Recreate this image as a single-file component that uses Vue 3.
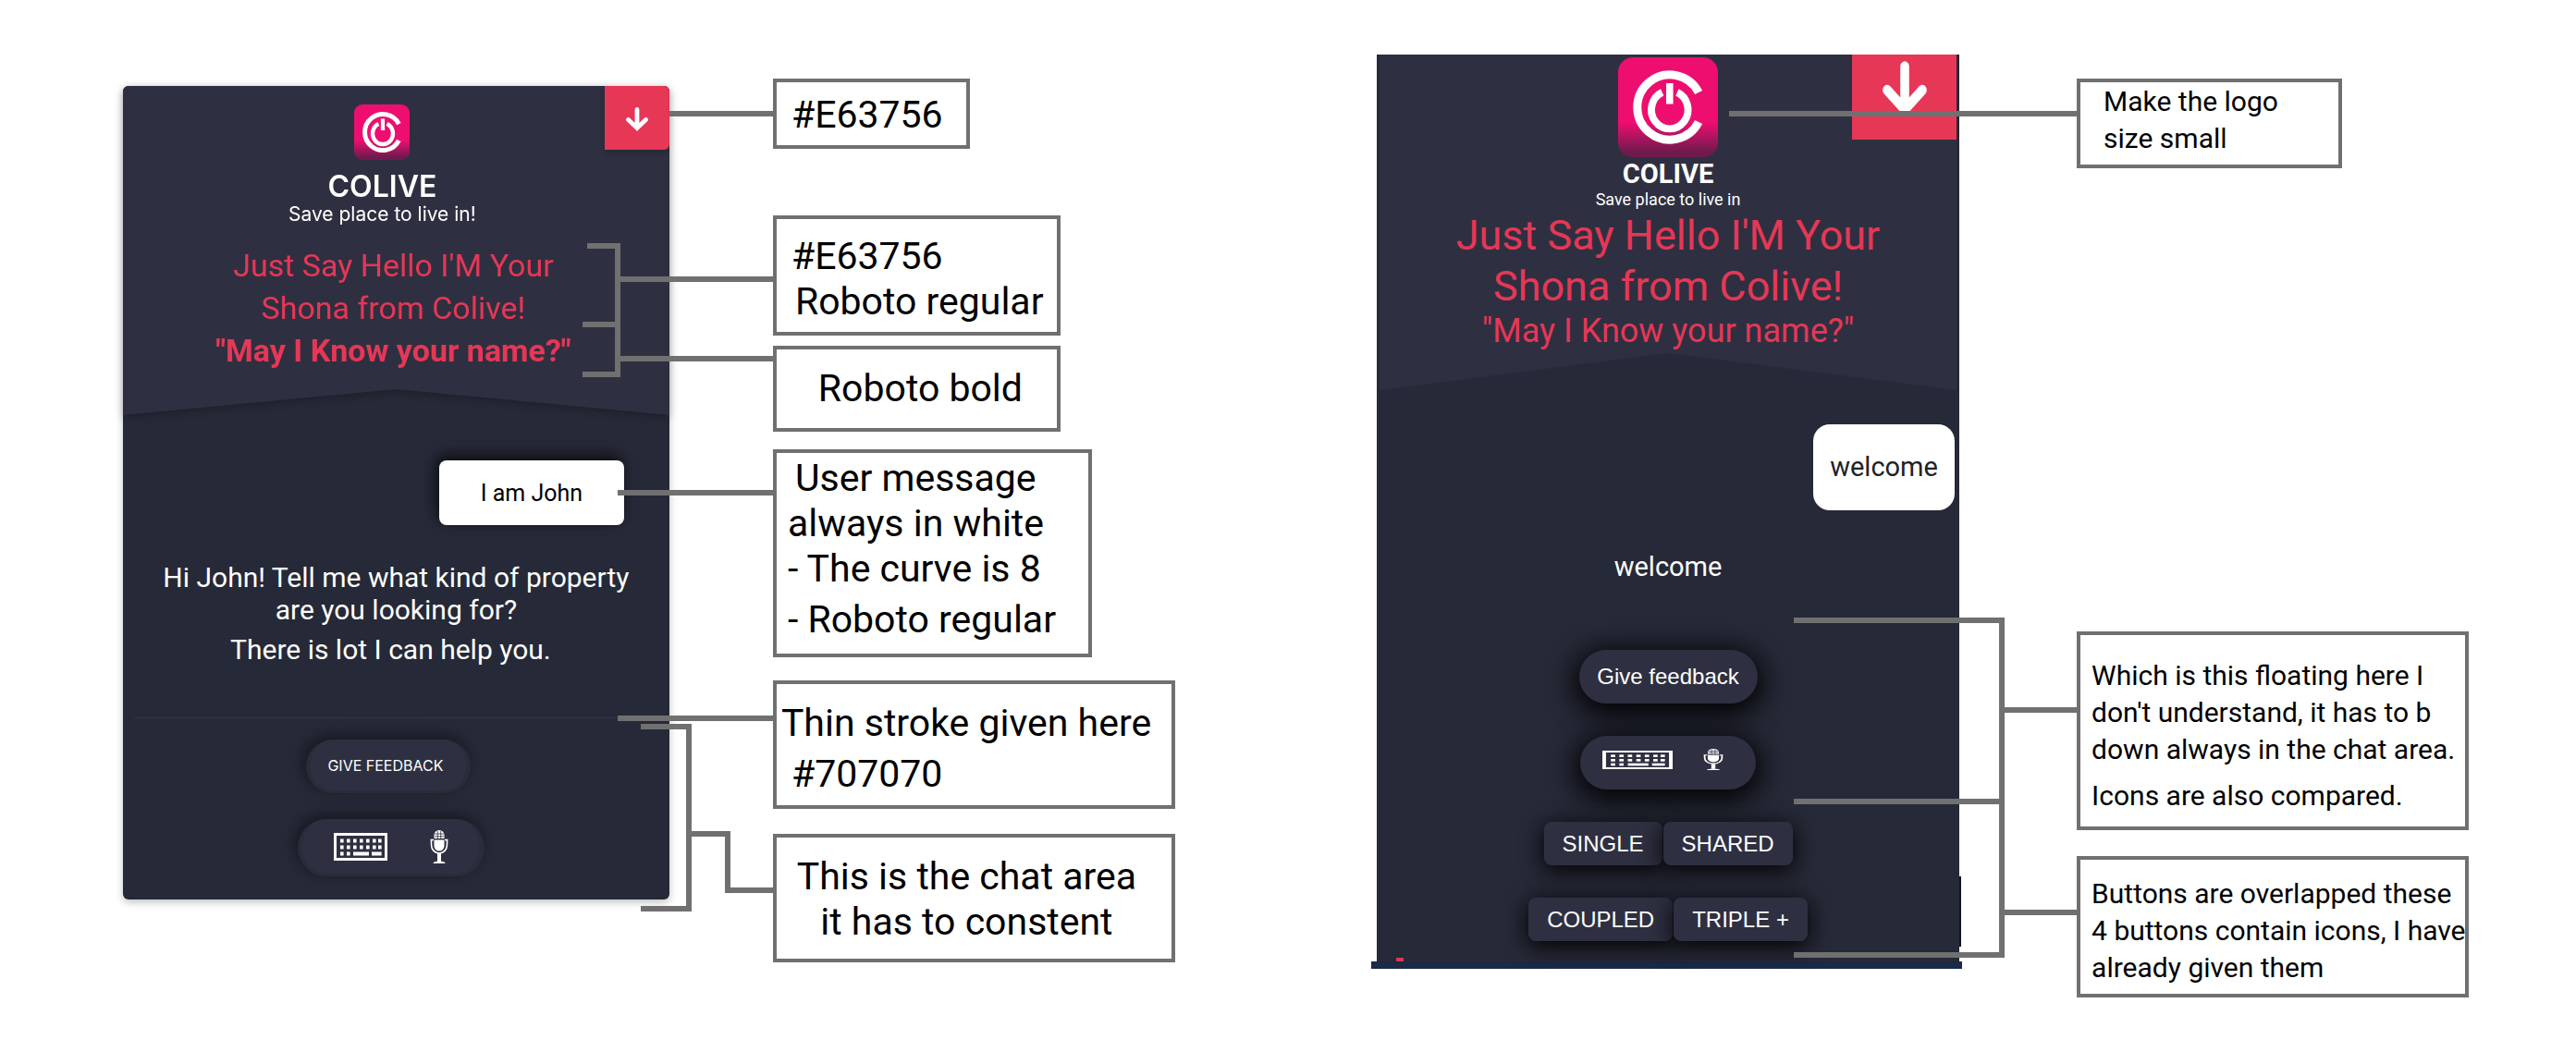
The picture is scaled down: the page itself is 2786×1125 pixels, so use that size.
<script setup>
const designLines = [
  'M591 123H703',
  'M502 266H535V405H497',
  'M497 351H535',
  'M535 302H703',
  'M535 388H703',
  'M535 533H703',
  'M535 777H703',
  'M560 786H612V983H560',
  'M612 902H654V963H703',
]

const buildLines = [
  'M387 123H763',
  'M457 671H682V1033H457',
  'M457 867H682',
  'M682 768H763',
  'M682 987H763',
]

const keyRows = [11, 18]
const keyCols = [8, 15, 22, 29, 36, 43, 49]
</script>

<template>
  <svg class="defs" aria-hidden="true">
    <defs>
      <linearGradient id="logo-fill" x1="0" y1="0" x2="0" y2="1">
        <stop offset="0.65" stop-color="#ee0e70" />
        <stop offset="0.95" stop-color="#6f1a4f" />
      </linearGradient>
      <symbol id="logo" viewBox="0 0 60 60">
        <rect width="60" height="60" rx="9" fill="url(#logo-fill)" />
        <g fill="none" stroke="#fff">
          <path d="M48.4 21.1A19.5 19.5 0 1 0 48.4 38.9" stroke-width="5" />
          <path d="M35.5 21A11 11.5 0 1 1 26.5 21" stroke-width="4.4" />
          <path d="M31 15.5V28" stroke-width="4.2" />
        </g>
      </symbol>
      <symbol id="arrow" viewBox="0 0 24 26" preserveAspectRatio="none">
        <path d="M12 2.5V21M2.5 13.4L12 22.4L21.5 13.4" fill="none" stroke="#fff" stroke-width="4.8" stroke-linecap="round" />
        <path d="M8 20h8l-4 5.8z" fill="#fff" />
      </symbol>
      <symbol id="keyboard" viewBox="0 0 58 30" preserveAspectRatio="none">
        <rect x="1.5" y="1.5" width="55" height="27" fill="none" stroke="#fff" stroke-width="3" />
        <g fill="#fff">
          <template v-for="row in keyRows" :key="row">
            <rect v-for="col in keyCols" :key="col" :x="col - 1" :y="row - 4.5" width="3.6" height="4" />
          </template>
          <rect x="7" y="20.5" width="3.6" height="4" />
          <rect x="14" y="20.5" width="3.6" height="4" />
          <rect x="21" y="20.5" width="17" height="4" />
          <rect x="41" y="20.5" width="10.6" height="4" />
        </g>
      </symbol>
      <symbol id="mic" viewBox="0 0 20 36" preserveAspectRatio="none">
        <path d="M4.500 9V5.500a5.500 5.500 0 0 1 11 0V9z" fill="#fff" />
        <path d="M8.3 1v8M11.7 1v8M5 4h10M5 6.8h10" stroke="#2e3041" stroke-width="0.8" />
        <path d="M4.500 10.500h11v6.500a5.500 5.500 0 0 1-11 0z" fill="#fff" />
        <path d="M0.500 10.500H4M16 10.500h3.500M1.500 11v5a8.500 9 0 0 0 17 0v-5" fill="none" stroke="#fff" stroke-width="1.600" />
        <path d="M10 25v9" fill="none" stroke="#fff" stroke-width="4" />
        <path d="M3.500 36q0-2.500 6.500-2.500t6.500 2.500z" fill="#fff" />
      </symbol>
    </defs>
  </svg>

  <main class="board">
    <section class="figure figure-design">
      <article class="phone design">
        <header class="head-shadow">
          <div class="head">
            <button class="down" type="button" aria-label="Minimise chat">
              <svg class="down-icon"><use href="#arrow" /></svg>
            </button>
            <div class="brand">
              <svg class="logo"><use href="#logo" /></svg>
              <h1 class="name">COLIVE</h1>
              <p class="tagline">Save place to live in!</p>
            </div>
            <p class="greeting">
              Just Say Hello I'M Your<br />Shona from Colive!<br /><strong>"May I Know your name?"</strong>
            </p>
          </div>
        </header>
        <p class="bubble">I am John</p>
        <div class="reply">
          <p>Hi John! Tell me what kind of property<br />are you looking for?</p>
          <p class="reply-last">There is lot I can help you.</p>
        </div>
        <footer class="controls">
          <button class="pill feedback" type="button">GIVE FEEDBACK</button>
          <div class="pill inputs">
            <button class="icon-button" type="button" aria-label="Type a message">
              <svg class="keyboard"><use href="#keyboard" /></svg>
            </button>
            <button class="icon-button" type="button" aria-label="Speak">
              <svg class="mic"><use href="#mic" /></svg>
            </button>
          </div>
        </footer>
      </article>

      <aside class="notes">
        <div class="note n-color"><p class="in">#E63756</p></div>
        <div class="note n-regular">
          <p class="in">#E63756</p>
          <p class="in-more">Roboto regular</p>
        </div>
        <div class="note n-bold"><p>Roboto bold</p></div>
        <div class="note n-message">
          <p class="in-more">User message</p>
          <p>always in white</p>
          <p>- The curve is 8</p>
          <p class="apart">- Roboto regular</p>
        </div>
        <div class="note n-stroke">
          <p>Thin stroke given here</p>
          <p class="apart in-more">#707070</p>
        </div>
        <div class="note n-area">
          <p>This is the chat area<br />it has to constent</p>
        </div>
      </aside>

      <svg class="lines" viewBox="0 0 1138 1125" preserveAspectRatio="none" aria-hidden="true">
        <path v-for="d in designLines" :key="d" :d="d" />
      </svg>
    </section>

    <section class="figure figure-build">
      <div class="build-wrap">
        <article class="phone build">
          <header class="head">
            <button class="down" type="button" aria-label="Minimise chat">
              <svg class="down-icon"><use href="#arrow" /></svg>
            </button>
            <div class="brand">
              <svg class="logo"><use href="#logo" /></svg>
              <h1 class="name">COLIVE</h1>
              <p class="tagline">Save place to live in</p>
            </div>
            <p class="greeting">Just Say Hello I'M Your<br />Shona from Colive!</p>
            <p class="question">"May I Know your name?"</p>
          </header>
          <p class="bubble">welcome</p>
          <p class="reply">welcome</p>
          <div class="controls">
            <button class="pill feedback" type="button">Give feedback</button>
            <div class="pill inputs">
              <button class="icon-button" type="button" aria-label="Type a message">
                <svg class="keyboard"><use href="#keyboard" /></svg>
              </button>
              <button class="icon-button" type="button" aria-label="Speak">
                <svg class="mic"><use href="#mic" /></svg>
              </button>
            </div>
            <div class="options">
              <button class="option" type="button">SINGLE</button>
              <button class="option" type="button">SHARED</button>
            </div>
            <div class="options">
              <button class="option" type="button">COUPLED</button>
              <button class="option" type="button">TRIPLE +</button>
            </div>
          </div>
          <span class="fleck"></span>
          <span class="edge"></span>
        </article>
        <div class="taskbar"></div>
      </div>

      <aside class="notes small">
        <div class="note n-logo"><p>Make the logo<br />size small</p></div>
        <div class="note n-floating">
          <p>Which is this floating here I<br />don't understand, it has to b<br />down always in the chat area.</p>
          <p class="apart">Icons are also compared.</p>
        </div>
        <div class="note n-buttons">
          <p>Buttons are overlapped these<br />4 buttons contain icons, I have<br />already given them</p>
        </div>
      </aside>

      <svg class="lines" viewBox="0 0 1187 1125" preserveAspectRatio="none" aria-hidden="true">
        <path v-for="d in buildLines" :key="d" :d="d" />
      </svg>
    </section>
  </main>
</template>

<style>
body {
  margin: 0;
  background: #fff;
}
</style>

<style scoped>
.defs {
  position: absolute;
  width: 0;
  height: 0;
}

.board {
  display: grid;
  grid-template-columns: minmax(0, 1138fr) minmax(0, 1187fr);
  column-gap: 8.36%;
  padding: 0 4.16% 44px 4.77%;
  font-family: Roboto, sans-serif;
  color: #000;
}

p,
h1 {
  margin: 0;
}

button {
  border: 0;
  padding: 0;
  font: inherit;
  color: inherit;
  background: none;
  cursor: pointer;
}

svg {
  display: block;
}

.figure {
  position: relative;
  display: grid;
  align-items: start;
  white-space: nowrap;
}

.figure-design {
  grid-template-columns: minmax(0, 591fr) minmax(0, 435fr);
  column-gap: 9.84%;
}

.figure-build {
  grid-template-columns: minmax(0, 639fr) minmax(0, 424fr);
  column-gap: 10.45%;
}

.lines {
  position: absolute;
  top: 0;
  left: 0;
  width: 100%;
  height: 1125px;
  pointer-events: none;
}

.lines path {
  fill: none;
  stroke: #707070;
  stroke-width: 6px;
  vector-effect: non-scaling-stroke;
}

/* Phones */
.phone {
  display: flex;
  flex-direction: column;
  background: #262937;
  color: #fff;
  text-align: center;
}

.head {
  position: relative;
  background: #2e3041;
}

.down {
  position: absolute;
  top: 0;
  right: 0;
  display: flex;
  justify-content: center;
  background: #e63756;
}

.brand {
  display: flex;
  flex-direction: column;
  align-items: center;
}

.greeting,
.question {
  color: #e63756;
}

.pill {
  display: flex;
  align-items: center;
  justify-content: center;
  box-sizing: border-box;
  background: #2e3041;
}

/* Intended design */
.design {
  margin-top: 93px;
  border-radius: 6px;
  box-shadow: 0 3px 8px rgba(0, 0, 0, 0.25);
}

.design .head-shadow {
  filter: drop-shadow(0 3px 5px rgba(0, 0, 0, 0.22));
}

.design .head {
  padding: 20px 0 47px;
  border-radius: 6px 6px 0 0;
  clip-path: polygon(0 0, 100% 0, 100% 100%, 50% calc(100% - 28px), 0 100%);
}

.design .down {
  width: 70px;
  height: 69px;
  padding-top: 23px;
  border-radius: 0 6px 6px 0;
  box-shadow: 0 3px 6px rgba(0, 0, 0, 0.2);
}

.design .down-icon {
  width: 24px;
  height: 26px;
}

.design .brand {
  padding-right: 30px;
}

.design .logo {
  width: 60px;
  height: 60px;
}

.design .name {
  margin-top: 11px;
  font: 600 32px/36px Inter, sans-serif;
}

.design .tagline {
  font: 400 21px/24px Inter, sans-serif;
}

.design .greeting {
  margin-top: 20px;
  padding-right: 6px;
  font-size: 34px;
  line-height: 46px;
}

.design .bubble {
  align-self: flex-end;
  box-sizing: border-box;
  width: 200px;
  margin: 49px 49px 0 0;
  padding-top: 2px;
  border-radius: 8px;
  background: #fff;
  box-shadow: -3px -5px 16px rgba(0, 0, 0, 0.7);
  color: #000;
  font-size: 25px;
  line-height: 68px;
}

.design .reply {
  margin-top: 39px;
  font-size: 30px;
  line-height: 35px;
}

.design .reply-last {
  padding-right: 12px;
  margin-top: 8px;
}

.design .controls {
  display: flex;
  flex-direction: column;
  align-items: center;
  gap: 28px;
  margin: 56px 10px 0 12px;
  padding: 23px 12px 25px 0;
  border-top: 1px solid #343646;
}

.design .pill {
  border: solid #292c3b;
  border-width: 0 5px 3px 4px;
  box-shadow: -3px -4px 16px rgba(0, 0, 0, 0.45);
}

.design .feedback {
  width: 178px;
  height: 58px;
  margin-right: 6px;
  padding-right: 6px;
  border-radius: 29px;
  font: 400 16px/20px Inter, sans-serif;
}

.design .inputs {
  width: 202px;
  height: 62px;
  gap: 46px;
  border-radius: 31px;
}

.design .keyboard {
  width: 58px;
  height: 30px;
}

.design .mic {
  width: 20px;
  height: 36px;
}

/* Current build */
.build-wrap {
  margin-top: 59px;
}

.build {
  position: relative;
  margin: 0 3px 0 6px;
  padding: 0 3px 22px;
}

.build .head {
  padding: 3px 0 42px;
  clip-path: polygon(0 0, 100% 0, 100% 100%, 50% calc(100% - 40px), 0 100%);
}

.build .down {
  width: 113px;
  height: 92px;
  padding-top: 7px;
}

.build .down-icon {
  width: 48px;
  height: 61px;
}

.build .logo {
  width: 108px;
  height: 108px;
}

.build .name {
  margin-top: 1px;
  font-size: 29px;
  line-height: 34px;
}

.build .tagline {
  font-size: 18px;
  line-height: 22px;
}

.build .greeting {
  font-size: 45px;
  line-height: 55px;
}

.build .question {
  font-size: 36px;
  line-height: 43px;
}

.build .bubble {
  align-self: flex-end;
  width: 153px;
  margin: 37px 2px 0 0;
  border-radius: 18px;
  background: #fff;
  color: #222;
  font-size: 29px;
  line-height: 93px;
}

.build .reply {
  margin-top: 43px;
  font-size: 29px;
  line-height: 36px;
}

.build .controls {
  display: flex;
  flex-direction: column;
  align-items: center;
  gap: 35px;
  margin-top: 72px;
  font: 400 24px/28px "Liberation Sans", sans-serif;
}

.build .pill {
  height: 58px;
  border-radius: 29px;
  box-shadow: 0 6px 30px 6px rgba(0, 0, 0, 0.95);
}

.build .feedback {
  width: 193px;
}

.build .inputs {
  width: 190px;
  gap: 33px;
  padding: 0 12px 7px 0;
}

.build .keyboard {
  width: 76px;
  height: 20px;
}

.build .mic {
  width: 22px;
  height: 23px;
}

.build .options {
  display: flex;
  gap: 1px;
}

.build .option {
  height: 47px;
  padding: 0 20px;
  border-radius: 8px;
  background: #2e3041;
  box-shadow: 0 5px 24px 1px rgba(0, 0, 0, 0.95);
}

.build .fleck {
  position: absolute;
  bottom: 0;
  left: 21px;
  width: 8px;
  height: 4px;
  background: #d23b58;
}

.build .edge {
  position: absolute;
  right: -2px;
  bottom: 16px;
  width: 2px;
  height: 76px;
  background: #10131f;
}

.taskbar {
  height: 8px;
  background: #1a2a47;
}

/* Notes */
.notes {
  display: flex;
  flex-direction: column;
  margin-top: 85px;
  font-size: 41px;
  line-height: 49px;
}

.note {
  box-sizing: border-box;
  border: 4px solid #707070;
  background: #fff;
}

.in {
  padding-left: 4px;
}

.in-more {
  padding-left: 8px;
}

.apart {
  margin-top: 6px;
}

.n-color {
  width: 49%;
  padding: 11px 0 8px 12px;
}

.n-regular {
  width: 71.5%;
  margin-top: 72px;
  padding: 16px 0 8px 12px;
}

.n-bold {
  width: 71.5%;
  margin-top: 11px;
  padding: 18px 0 18px 8px;
  text-align: center;
}

.n-message {
  width: 79.3%;
  margin-top: 19px;
  padding: 3px 0 12px 12px;
}

.n-stroke {
  margin-top: 25px;
  padding: 18px 0 9px 5px;
}

.n-stroke .apart {
  padding-left: 11px;
}

.n-area {
  margin-top: 27px;
  padding: 18px 16px 15px 0;
  text-align: center;
}

.small {
  font-size: 30px;
  line-height: 40px;
}

.small .apart {
  margin-top: 10px;
}

.n-logo {
  width: 67.7%;
  padding: 1px 0 8px 25px;
}

.n-floating {
  margin-top: 501px;
  padding: 24px 0 13px 12px;
}

.n-buttons {
  margin-top: 28px;
  padding: 17px 0 8px 12px;
}
</style>
